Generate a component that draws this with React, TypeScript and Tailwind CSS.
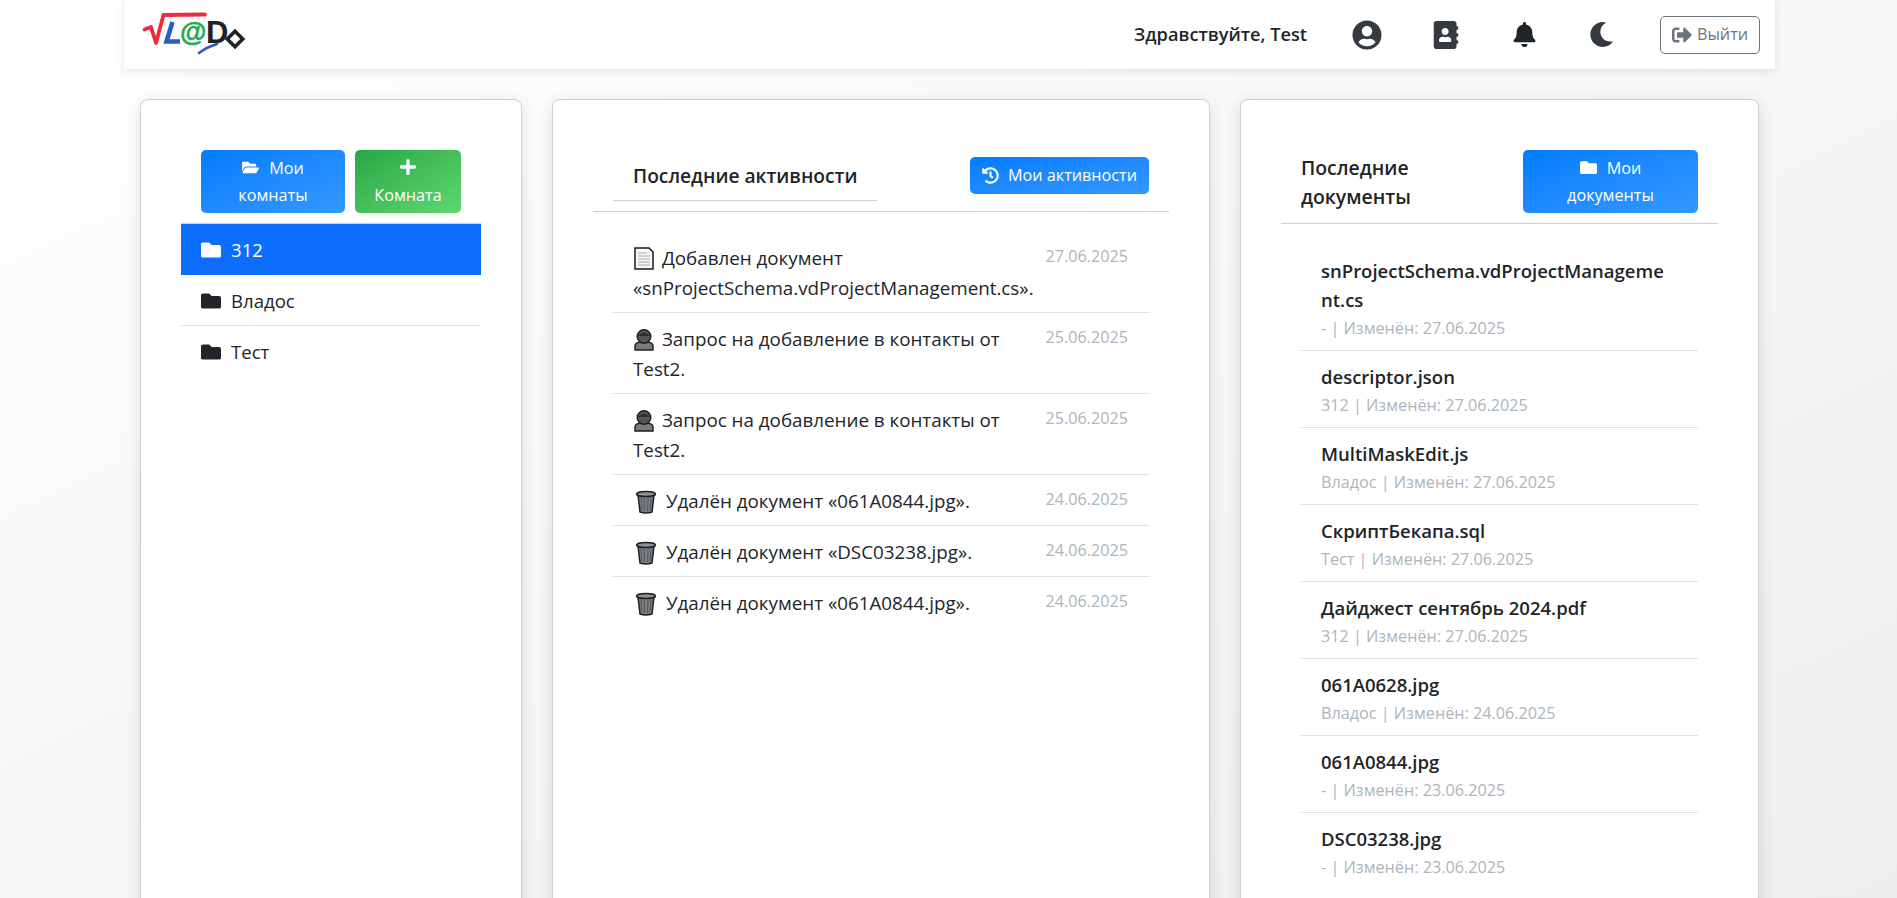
import React from "react";
import { FaUserCircle, FaAddressBook, FaBell, FaMoon, FaSignOutAlt, FaFolderOpen, FaFolder, FaHistory, FaPlus } from "react-icons/fa";

function Logo() {
  return (
    <svg width="106" height="50" viewBox="0 0 106 50" className="block">
      <path d="M3.500 19.500 L10 17 L15 33 L22.500 5 L64 4.500" fill="none" stroke="#ee2a3c" strokeWidth="3.8" strokeLinecap="round" strokeLinejoin="round" />
      <path d="M31.500 12 L25.500 31.500 L39 31.500" fill="none" stroke="#2d5cc4" strokeWidth="4.6" strokeLinecap="butt" strokeLinejoin="miter" />
      <text x="39" y="31" fontFamily="'Liberation Sans', sans-serif" fontSize="27" fontWeight="700" fill="#2aa84f" stroke="#2aa84f" strokeWidth="0.5">@</text>
      <text x="65" y="33" fontFamily="'Liberation Sans', sans-serif" fontSize="31" fontWeight="700" fill="#222222">D</text>
      <rect x="88.500" y="23.500" width="11" height="11" transform="rotate(45 94 29)" fill="none" stroke="#222222" strokeWidth="3.6" />
      <path d="M58 43 Q66 37 76 34" fill="none" stroke="#2d5cc4" strokeWidth="2.8" strokeLinecap="round" />
    </svg>
  );
}

function DocEmoji() {
  return (
    <svg width="20" height="23" viewBox="0 0 20 23" className="inline-block align-[-5px] ml-[1px] mr-[3px]">
      <path d="M1 1 H15 L19 5 V22 H1 Z" fill="#f7f7f7" stroke="#1a1a1a" strokeWidth="1.5" />
      <path d="M4 6 H13 M4 9 H16 M4 12 H16 M4 15 H16 M4 18 H16" stroke="#c4c4c4" strokeWidth="1.4" />
    </svg>
  );
}

function PersonEmoji() {
  return (
    <svg width="20" height="23" viewBox="0 0 20 23" className="inline-block align-[-5px] ml-[1px] mr-[3px]">
      <path d="M1 22 V18 Q1 15 6 14 H14 Q19 15 19 18 V22 Z" fill="#7a7a7a" stroke="#1f1f1f" strokeWidth="1.4" />
      <circle cx="10" cy="8.500" r="6.800" fill="#555555" stroke="#1f1f1f" strokeWidth="1.4" />
      <path d="M3.500 8 Q10 1 16.500 8" fill="#2e2e2e" />
    </svg>
  );
}

function TrashEmoji() {
  return (
    <svg width="22" height="24" viewBox="0 0 22 24" className="inline-block align-[-6px] ml-[2px] mr-[4px]">
      <path d="M3 5 L5 22 Q11 24 17 22 L19 5 Z" fill="#7b7f82" stroke="#1f1f1f" strokeWidth="1.5" />
      <ellipse cx="11" cy="4" rx="9.500" ry="2.600" fill="#8d9194" stroke="#1f1f1f" strokeWidth="1.5" />
      <path d="M6 8 L7 20 M9 8 L9.500 21 M13 8 L12.500 21 M16 8 L15 20" stroke="#53575a" strokeWidth="1" />
    </svg>
  );
}

const activities: { icon: React.ReactNode; text: string; date: string }[] = [
  { icon: <DocEmoji />, text: "Добавлен документ «snProjectSchema.vdProjectManagement.cs».", date: "27.06.2025" },
  { icon: <PersonEmoji />, text: "Запрос на добавление в контакты от Test2.", date: "25.06.2025" },
  { icon: <PersonEmoji />, text: "Запрос на добавление в контакты от Test2.", date: "25.06.2025" },
  { icon: <TrashEmoji />, text: "Удалён документ «061A0844.jpg».", date: "24.06.2025" },
  { icon: <TrashEmoji />, text: "Удалён документ «DSC03238.jpg».", date: "24.06.2025" },
  { icon: <TrashEmoji />, text: "Удалён документ «061A0844.jpg».", date: "24.06.2025" },
];

const docs = [
  { name: "snProjectSchema.vdProjectManageme\nnt.cs", sub: "- | Изменён: 27.06.2025" },
  { name: "descriptor.json", sub: "312 | Изменён: 27.06.2025" },
  { name: "MultiMaskEdit.js", sub: "Владос | Изменён: 27.06.2025" },
  { name: "СкриптБекапа.sql", sub: "Тест | Изменён: 27.06.2025" },
  { name: "Дайджест сентябрь 2024.pdf", sub: "312 | Изменён: 27.06.2025" },
  { name: "061A0628.jpg", sub: "Владос | Изменён: 24.06.2025" },
  { name: "061A0844.jpg", sub: "- | Изменён: 23.06.2025" },
  { name: "DSC03238.jpg", sub: "- | Изменён: 23.06.2025" },
];

const cardClass = "bg-white border border-[#d0d0d0] rounded-lg shadow-[0_4px_16px_rgba(0,0,0,0.12)] min-h-[830px]";
const blueBtn = "bg-gradient-to-br from-[#007bff] to-[#3399ff] text-white rounded-[5px] text-[16.2px] leading-[27px] text-center";

export default function App() {
  return (
    <div className="h-[898px] overflow-hidden bg-gradient-to-br from-white to-[#eeeeee] text-[#212529] text-[18px] font-['Open_Sans','Noto_Sans',sans-serif]">
      <header className="ml-[124px] w-[1651px] h-[69px] bg-white shadow-[0_2px_8px_rgba(0,0,0,0.1)] flex items-center pl-[17px] pr-[15px]">
        <Logo />
        <div className="ml-auto flex items-center">
          <span className="font-semibold text-[18.2px]">Здравствуйте, Test</span>
          <FaUserCircle className="ml-[45px] text-[30px] text-[#343a40]" />
          <FaAddressBook className="ml-[50px] text-[28px] text-[#343a40]" />
          <FaBell className="ml-[52px] text-[25px] text-[#212529]" />
          <FaMoon className="ml-[52px] text-[25px] text-[#343a40]" />
          <button className="ml-[46px] w-[100px] h-[38px] border border-[#6c757d] rounded-[5px] text-[#6c757d] text-[16.2px] flex items-center justify-center gap-[5px]">
            <FaSignOutAlt className="text-[20px]" />
            Выйти
          </button>
        </div>
      </header>

      <main className="flex items-start pl-[140px] mt-[30px]">
        <section className={cardClass + " w-[382px] pt-[50px] px-[40px]"}>
          <div className="flex gap-[10px] pl-[20px] mb-[10px]">
            <button className={blueBtn + " w-[144px] h-[63px]"}>
              <FaFolderOpen className="inline-block text-[17px] mr-[10px] align-[-2px]" />Мои<br />комнаты
            </button>
            <button className="w-[106px] h-[63px] bg-gradient-to-br from-[#28a745] to-[#5dd870] text-white rounded-[5px] text-[16.2px] leading-[27px] text-center">
              <FaPlus className="inline-block text-[18px] align-[-2px]" /><br />Комната
            </button>
          </div>
          <div className="w-[300px] text-[18.6px]">
            <div className="h-[52px] border-t border-[#d0d0d0] bg-[#0d6efd] text-white flex items-center pl-[20px] pt-[1px] gap-[10px]"><FaFolder className="text-[20px] text-white" />312</div>
            <div className="h-[51px] border-b border-[#dee2e6] flex items-center pl-[20px] pt-[1px] gap-[10px]"><FaFolder className="text-[20px] text-[#212529]" />Владос</div>
            <div className="h-[51px] flex items-center pl-[20px] pt-[1px] gap-[10px]"><FaFolder className="text-[20px] text-[#212529]" />Тест</div>
          </div>
        </section>

        <section className={cardClass + " w-[658px] ml-[30px] px-[40px] pt-[57px]"}>
          <div className="flex items-start h-[55px] border-b border-[#d0d0d0] w-[576px]">
            <div className="ml-[20px] w-[264px] h-[44px] border-b border-[#d0d0d0] pl-[20px] pt-[5px] font-semibold text-[19.2px]">Последние активности</div>
            <button className={blueBtn + " ml-[93px] w-[179px] h-[37px] flex items-center justify-center gap-[9px]"}>
              <FaHistory className="text-[17px]" />Мои активности
            </button>
          </div>
          <div className="mx-[20px] mt-[20px] w-[536px]">
            {activities.map((a, i) => (
              <div key={i} className="flex border-b border-[#dee2e6] last:border-b-0 pl-[20px] pr-[21px] pt-[11px] pb-[9px] text-[18.8px] leading-[30px]">
                <div className="w-[405px]">{a.icon}{" "}{a.text}</div>
                <div className="ml-auto text-[16.2px] leading-[26px] text-[#adb5bd]">{a.date}</div>
              </div>
            ))}
          </div>
        </section>

        <section className={cardClass + " w-[519px] ml-[30px] px-[40px] pt-[50px]"}>
          <div className="flex items-start h-[74px] border-b border-[#d0d0d0] w-[437px]">
            <div className="ml-[20px] w-[222px] font-semibold text-[19.4px] leading-[29px] pt-[3px]">Последние<br />документы</div>
            <button className={blueBtn + " w-[175px] h-[63px]"}>
              <FaFolder className="inline-block text-[17px] mr-[10px] align-[-2px]" />Мои<br />документы
            </button>
          </div>
          <div className="ml-[20px] mt-[21px] w-[397px]">
            {docs.map((d, i) => (
              <div key={i} className="border-b border-[#dee2e6] last:border-b-0 pl-[20px] pr-[20px] pt-[11px] pb-[8px]">
                <div className="font-semibold text-[18.5px] leading-[29px] whitespace-pre-line">{d.name}</div>
                <div className="mt-[1px] text-[16.2px] leading-[27px] text-[#adb5bd]">{d.sub}</div>
              </div>
            ))}
          </div>
        </section>
      </main>
    </div>
  );
}
